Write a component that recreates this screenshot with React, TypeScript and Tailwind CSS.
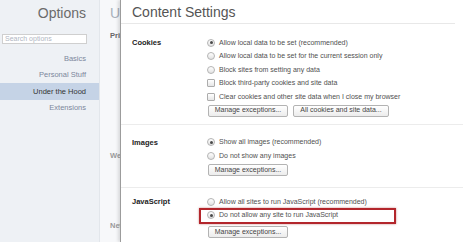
import React from "react";

function Radio({ checked }: { checked?: boolean }) {
  return (
    <span className="relative flex h-[8px] w-[8px] shrink-0 items-center justify-center rounded-full border border-[#b4b4b4] bg-gradient-to-b from-[#ffffff] to-[#e2e2e2]">
      {checked && <span className="h-[3px] w-[3px] rounded-full bg-[#4a4a4a]" />}
    </span>
  );
}

function Check() {
  return (
    <span className="h-[8px] w-[8px] shrink-0 rounded-[1px] border border-[#acacac] bg-gradient-to-b from-[#ffffff] to-[#e6e6e6]" />
  );
}

function Row({ kind, checked, children }: { kind: "radio" | "check"; checked?: boolean; children: React.ReactNode }) {
  return (
    <div className="flex h-[13.5px] items-center gap-[4px] whitespace-nowrap text-[7px] text-[#505050]">
      {kind === "radio" ? <Radio checked={checked} /> : <Check />}
      <span>{children}</span>
    </div>
  );
}

function Btn({ children, w }: { children: React.ReactNode; w: string }) {
  return (
    <div
      className={`flex h-[12px] items-center justify-center whitespace-nowrap rounded-[2px] border border-[#b3b3b3] bg-gradient-to-b from-[#ffffff] to-[#ececec] text-[7px] text-[#444] ${w}`}
    >
      {children}
    </div>
  );
}

function Section({ label, children, className }: { label: string; children: React.ReactNode; className: string }) {
  return (
    <div className={`flex pl-[11px] ${className}`}>
      <div className="w-[75px] shrink-0">
        <div className="flex h-[13.5px] items-center text-[7.5px] font-bold text-[#222]">{label}</div>
      </div>
      <div className="flex flex-col">{children}</div>
    </div>
  );
}

export default function App() {
  return (
    <div className="flex h-[242px] w-[474px] overflow-hidden bg-white font-['Liberation_Sans',Arial,sans-serif]">
      {/* Sidebar */}
      <div className="flex w-[100px] shrink-0 flex-col border-r border-[#e2e6eb] bg-[#eef1f5] pt-[5px]">
        <div className="pr-[13px] text-right text-[14px] leading-[17px] text-[#6b6b6b]">Options</div>
        <div className="ml-[2px] mt-[12px] flex h-[10px] w-[85px] items-center border border-[#cfcfcf] bg-white pl-[2px] text-[7px] text-[#b0b6c2]">
          Search options
        </div>
        <div className="mt-[6px] flex flex-col text-[7.5px]">
          <div className="flex h-[16.5px] items-center justify-end pr-[13px] text-[#7c879c]">Basics</div>
          <div className="flex h-[16.5px] items-center justify-end pr-[13px] text-[#7c879c]">Personal Stuff</div>
          <div className="flex h-[16.5px] items-center justify-end bg-[#c5d3e6] pr-[13px] text-[#333]">Under the Hood</div>
          <div className="flex h-[16.5px] items-center justify-end pr-[13px] text-[#7c879c]">Extensions</div>
        </div>
      </div>

      {/* Underlying page strip */}
      <div className="flex w-[20px] shrink-0 flex-col overflow-hidden whitespace-nowrap bg-[#f7f8fa] pl-[10px] pt-[5px]">
        <div className="text-[14px] leading-[17px] text-[#a9b0bb]">Under the Hood</div>
        <div className="mt-[9px] text-[7.5px] font-bold leading-[9px] text-[#666]">Privacy</div>
        <div className="mt-[111px] text-[7.5px] font-bold leading-[9px] text-[#9a9a9a]">Web Content</div>
        <div className="mt-[61px] text-[7.5px] font-bold leading-[9px] text-[#9a9a9a]">Network</div>
      </div>

      {/* Overlay panel */}
      <div className="flex flex-1 flex-col border-l border-[#9c9c9c] bg-white shadow-[-2px_0_3px_rgba(0,0,0,0.12)]">
        <div className="h-[23px] pl-[11px] pt-[4px] text-[14px] leading-[17px] text-[#555]">Content Settings</div>
        <div className="mr-[19px] h-px bg-[#e8e8e8]" />

        <Section label="Cookies" className="pt-[12px] pb-[7px]">
          <Row kind="radio" checked>Allow local data to be set (recommended)</Row>
          <Row kind="radio">Allow local data to be set for the current session only</Row>
          <Row kind="radio">Block sites from setting any data</Row>
          <Row kind="check">Block third-party cookies and site data</Row>
          <Row kind="check">Clear cookies and other site data when I close my browser</Row>
          <div className="ml-[1px] mt-[1px] flex gap-[5px]">
            <Btn w="w-[80px]">Manage exceptions...</Btn>
            <Btn w="w-[96px]">All cookies and site data...</Btn>
          </div>
        </Section>
        <div className="mr-[11px] h-px bg-[#ececec]" />

        <Section label="Images" className="pt-[11px] pb-[11px]">
          <Row kind="radio" checked>Show all images (recommended)</Row>
          <Row kind="radio">Do not show any images</Row>
          <div className="ml-[1px] mt-[1.5px] flex">
            <Btn w="w-[80px]">Manage exceptions...</Btn>
          </div>
        </Section>
        <div className="mr-[11px] h-px bg-[#ececec]" />

        <Section label="JavaScript" className="pt-[7px]">
          <Row kind="radio">Allow all sites to run JavaScript (recommended)</Row>
          <div className="relative">
            <Row kind="radio" checked>Do not allow any site to run JavaScript</Row>
            <div className="absolute left-[-8px] top-[-1px] h-[16px] w-[197px] border-2 border-[#b3262c] shadow-[0_0_2px_rgba(150,20,20,0.5)]" />
          </div>
          <div className="ml-[1px] mt-[4px] flex">
            <Btn w="w-[80px]">Manage exceptions...</Btn>
          </div>
        </Section>
      </div>
    </div>
  );
}
